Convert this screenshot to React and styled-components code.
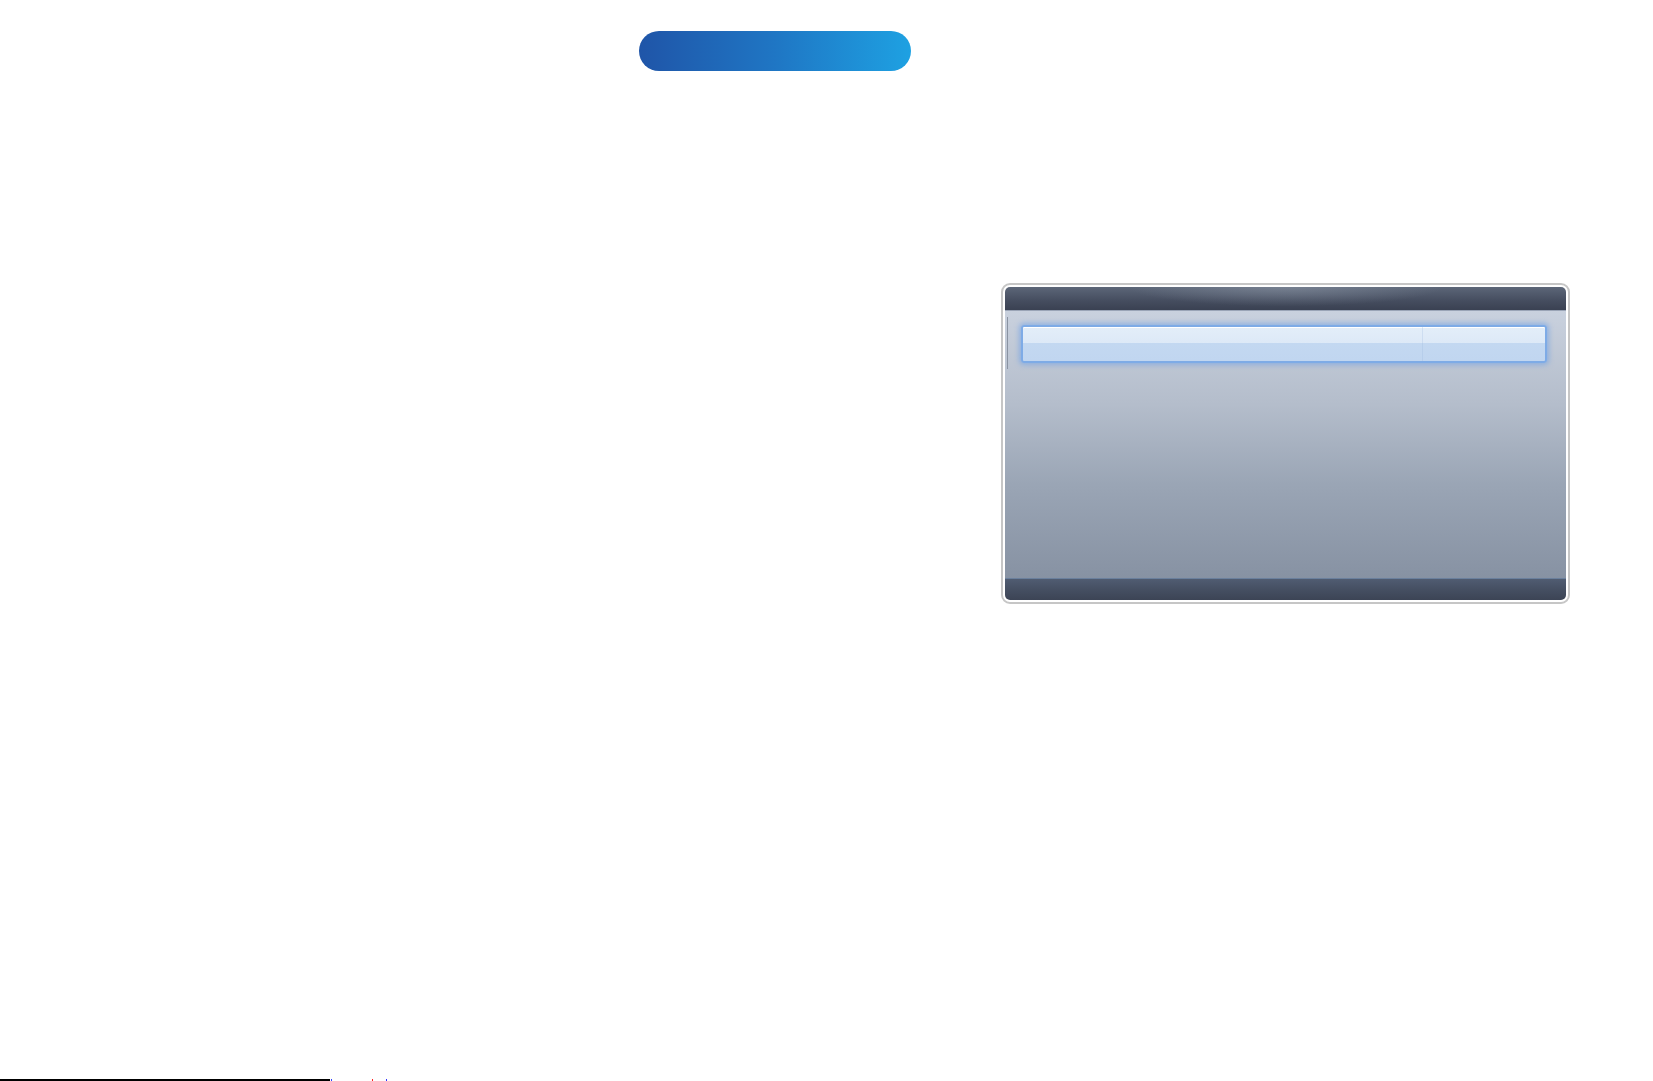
import React from 'react';
import styled, { createGlobalStyle } from 'styled-components';

const Global = createGlobalStyle`
  html, body {
    margin: 0;
    padding: 0;
    background: #ffffff;
    font-family: "Liberation Sans", Arial, sans-serif;
  }
`;

const Page = styled.div`
  width: 1653px;
  height: 1081px;
  display: flex;
  flex-direction: column;
  overflow: hidden;
`;

const Header = styled.div`
  padding: 31px 0 0 639px;
`;

const Pill = styled.div`
  width: 272px;
  height: 40px;
  border-radius: 20px;
  background: linear-gradient(90deg, #1f55a8 0%, #1f76c4 50%, #1ea1e2 100%);
`;

const Stage = styled.div`
  padding: 212px 0 0 1001px;
`;

const Frame = styled.div`
  width: 561px;
  height: 313px;
  border: 2px solid #c6c6c6;
  border-radius: 9px;
  background: #ffffff;
  padding: 2px;
  box-sizing: content-box;
  display: flex;
  flex-direction: column;
  overflow: hidden;
`;

const Screen = styled.div`
  flex: 1;
  display: flex;
  flex-direction: column;
  border-radius: 5px;
  overflow: hidden;
`;

const TitleBar = styled.div`
  height: 23px;
  background:
    radial-gradient(ellipse 40% 120% at 50% 0%, rgba(140, 150, 165, 0.55), rgba(140, 150, 165, 0) 70%),
    linear-gradient(180deg, #5c6678 0%, #454d5f 60%, #3a4152 100%);
  border-bottom: 1px solid #9aa4b6;
`;

const Body = styled.div`
  flex: 1;
  position: relative;
  background: linear-gradient(180deg, #c9d1de 0%, #b4bdcb 35%, #9aa5b5 65%, #8792a3 100%);
  padding: 14px 19px 0 16px;
`;

const EdgeLine = styled.div`
  position: absolute;
  left: 2px;
  top: 6px;
  width: 1px;
  height: 52px;
  background: #8a93a2;
`;

const Row = styled.div`
  height: 34px;
  border-radius: 3px;
  border: 2px solid #7eabe6;
  box-shadow: 0 0 5px 2px rgba(110, 160, 230, 0.6), inset 0 1px 0 #ffffff;
  background: linear-gradient(180deg, #e3eef9 0%, #dde9f7 47%, #c3d8f1 47%, #c1d6f0 100%);
  display: flex;
`;

const Cell = styled.div`
  flex: ${p => p.$grow};
  border-right: ${p => (p.$last ? 'none' : '1px solid rgba(150, 180, 220, 0.25)')};
`;

const Footer = styled.div`
  height: 21px;
  border-top: 1px solid #6a7f9c;
  background: linear-gradient(180deg, #505c72 0%, #454f62 50%, #3c4455 100%);
`;

const Bottom = styled.div`
  margin-top: auto;
  height: 2px;
  display: flex;
  align-items: stretch;
`;

const Rule = styled.div`
  width: 330px;
  background: #000000;
`;

const Dot = styled.div`
  width: 1px;
  margin-left: ${p => p.$gap}px;
  background: ${p => p.$color};
`;

export default function App() {
  return (
    <Page>
      <Global />
      <Header>
        <Pill />
      </Header>
      <Stage>
        <Frame>
          <Screen>
            <TitleBar />
            <Body>
              <EdgeLine />
              <Row>
                <Cell $grow={400} />
                <Cell $grow={122} $last />
              </Row>
            </Body>
            <Footer />
          </Screen>
        </Frame>
      </Stage>
      <Bottom>
        <Rule />
        <Dot $gap={1} $color="#3040ff" />
        <Dot $gap={40} $color="#ff2020" />
        <Dot $gap={13} $color="#3030ff" />
      </Bottom>
    </Page>
  );
}
